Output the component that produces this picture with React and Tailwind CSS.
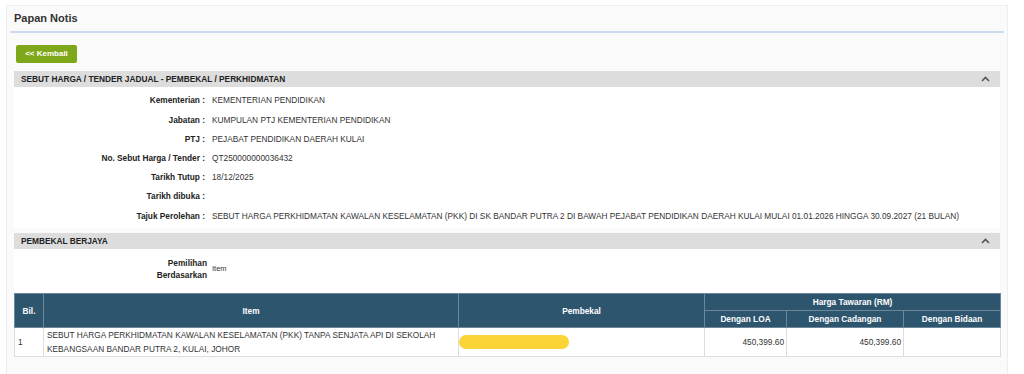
import React from 'react';

const info = [
  ['Kementerian', 'KEMENTERIAN PENDIDIKAN'],
  ['Jabatan', 'KUMPULAN PTJ KEMENTERIAN PENDIDIKAN'],
  ['PTJ', 'PEJABAT PENDIDIKAN DAERAH KULAI'],
  ['No. Sebut Harga / Tender', 'QT250000000036432'],
  ['Tarikh Tutup', '18/12/2025'],
  ['Tarikh dibuka', ''],
  [
    'Tajuk Perolehan',
    'SEBUT HARGA PERKHIDMATAN KAWALAN KESELAMATAN (PKK) DI SK BANDAR PUTRA 2 DI BAWAH PEJABAT PENDIDIKAN DAERAH KULAI MULAI 01.01.2026 HINGGA 30.09.2027 (21 BULAN)',
  ],
];

const Chevron = () => (
  <svg width="9" height="6" viewBox="0 0 9 6" className="text-[#555]">
    <polyline points="1,5 4.5,1.5 8,5" fill="none" stroke="currentColor" strokeWidth="1.6" />
  </svg>
);

const SectionHeader = ({ title }) => (
  <div className="h-[16px] bg-[#dddddd] flex items-center justify-between pl-[7px] pr-[10px]">
    <span className="font-bold text-[#222]">{title}</span>
    <Chevron />
  </div>
);

const App = () => {
  return (
    <div
      className="h-[374px] overflow-hidden bg-white pt-[5px] text-[8.3px] text-[#333]"
      style={{ fontFamily: '"Liberation Sans", Arial, sans-serif' }}
    >
      <div className="ml-[6px] w-[1002px] min-h-[390px] border border-[#eeeeee] bg-[#fafafa]">
        <div className="h-[25px] flex items-center pl-[7px]">
          <h1 className="text-[11px] font-bold text-[#333]">Papan Notis</h1>
        </div>
        <div className="mx-[3px] h-[2px] bg-[#c9dcf0]" />

        <div className="pt-[12px] pl-[9px]">
          <button className="w-[61px] h-[18px] rounded-[2px] bg-[#7fa71a] text-white font-bold text-[8px]">
            &lt;&lt; Kembali
          </button>
        </div>

        <div className="mx-[7px] mt-[8px]">
          <SectionHeader title="SEBUT HARGA / TENDER JADUAL - PEMBEKAL / PERKHIDMATAN" />
          <div className="bg-white pt-[4px] pb-[3px]">
            {info.map(([label, value]) => (
              <div key={label} className="h-[19.2px] flex items-center">
                <div className="w-[191px] text-right font-bold text-[#222]">{label} :</div>
                <div className="pl-[7px]">{value}</div>
              </div>
            ))}
          </div>
        </div>

        <div className="mx-[7px] mt-[5px]">
          <SectionHeader title="PEMBEKAL BERJAYA" />
          <div className="bg-white pt-[8px]">
            <div className="flex items-center">
              <div className="w-[193px] text-right font-bold text-[#222] leading-[12px]">
                Pemilihan
                <br />
                Berdasarkan
              </div>
              <div className="pl-[5px] text-[7.5px] -mt-[1px]">Item</div>
            </div>

            <table className="mt-[12px] w-[986px] border-collapse table-fixed">
              <colgroup>
                <col className="w-[29px]" />
                <col className="w-[415px]" />
                <col className="w-[246px]" />
                <col className="w-[82px]" />
                <col className="w-[117px]" />
                <col className="w-[97px]" />
              </colgroup>
              <thead className="bg-[#2e556e] text-white font-bold">
                <tr className="h-[17px]">
                  <th rowSpan={2} className="border border-[#6b8799] font-bold">Bil.</th>
                  <th rowSpan={2} className="border border-[#6b8799] font-bold">Item</th>
                  <th rowSpan={2} className="border border-[#6b8799] font-bold">Pembekal</th>
                  <th colSpan={3} className="border border-[#6b8799] font-bold">Harga Tawaran (RM)</th>
                </tr>
                <tr className="h-[17px]">
                  <th className="border border-[#6b8799] font-bold">Dengan LOA</th>
                  <th className="border border-[#6b8799] font-bold">Dengan Cadangan</th>
                  <th className="border border-[#6b8799] font-bold">Dengan Bidaan</th>
                </tr>
              </thead>
              <tbody>
                <tr className="h-[29px]">
                  <td className="border border-[#dddddd] pl-[3px]">1</td>
                  <td className="border border-[#dddddd] pl-[3px] leading-[14px]">
                    SEBUT HARGA PERKHIDMATAN KAWALAN KESELAMATAN (PKK) TANPA SENJATA API DI SEKOLAH KEBANGSAAN BANDAR PUTRA 2, KULAI, JOHOR
                  </td>
                  <td className="border border-[#dddddd] p-0">
                    <div className="w-[110px] h-[14px] rounded-full bg-[#fbd535]" />
                  </td>
                  <td className="border border-[#dddddd] text-right pr-[2px]">450,399.60</td>
                  <td className="border border-[#dddddd] text-right pr-[2px]">450,399.60</td>
                  <td className="border border-[#dddddd]" />
                </tr>
              </tbody>
            </table>
          </div>
        </div>
      </div>
    </div>
  );
};

export default App;
